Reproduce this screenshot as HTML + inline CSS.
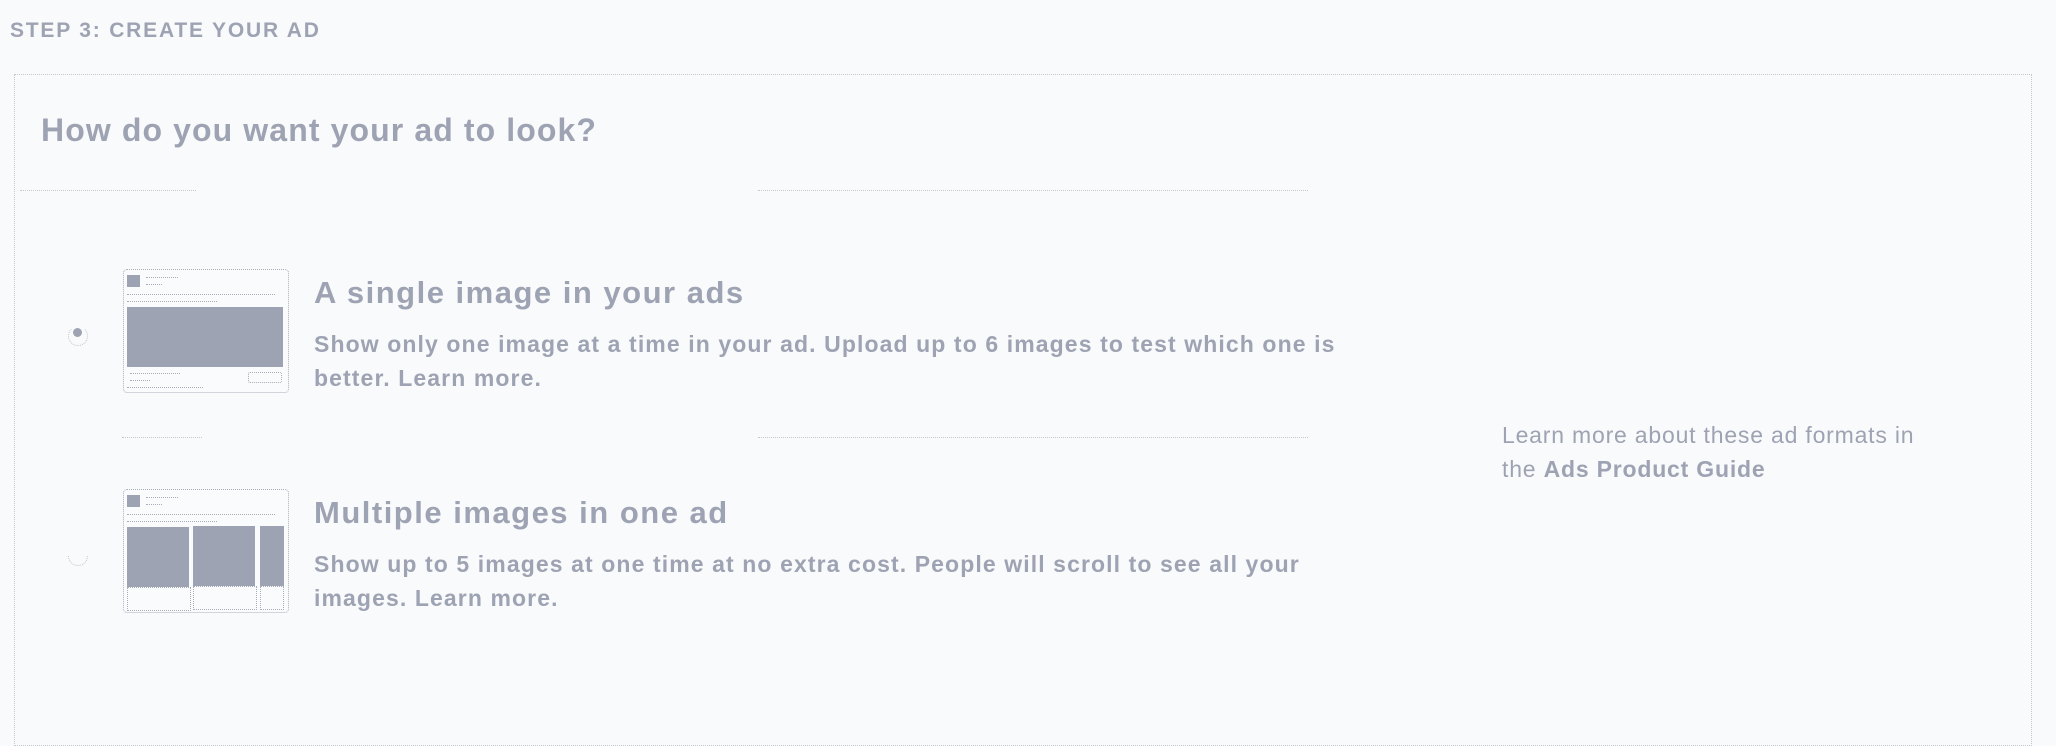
<!DOCTYPE html>
<html><head><meta charset="utf-8"><style>
html,body{margin:0;padding:0;}
body{width:2056px;height:732px;background:#f9fafb;position:relative;overflow:hidden;font-family:"Liberation Sans",Arial,sans-serif;color:#9ea3b3;}
.a{position:absolute;}
.b{font-weight:bold;}
.dl{position:absolute;height:0;border-top:1px dotted #c4c7d0;}
.thumb{position:absolute;width:164px;height:122px;border:1.5px dotted #a9adba;border-radius:4px;background:#fafbfc;}
.thumb div{position:absolute;}
.g{background:#9ea3b3;}
.ln{height:0;border-top:1px dotted #a9adba;}
</style></head><body>
<div class="a b" style="left:10px;top:19px;font-size:21px;letter-spacing:1.8px;">STEP 3: CREATE YOUR AD</div>
<div class="a" style="left:14px;top:74px;width:2016px;height:670px;border:1px dotted #c4c7d0;"></div>
<div class="a b" style="left:41px;top:112px;font-size:32px;letter-spacing:1.1px;">How do you want your ad to look?</div>
<div class="dl" style="left:20px;top:190px;width:176px;"></div>
<div class="dl" style="left:758px;top:190px;width:550px;"></div>
<div class="dl" style="left:122px;top:437px;width:80px;"></div>
<div class="dl" style="left:758px;top:437px;width:550px;"></div>

<div class="a" style="left:68px;top:326px;width:18px;height:18px;border-radius:50%;border:1px dotted #c0c4cc;border-top-color:transparent;"></div>
<div class="a g" style="left:73px;top:328px;width:9px;height:9px;border-radius:50%;"></div>
<div class="a" style="left:68px;top:546px;width:18px;height:18px;border-radius:50%;border:1px dotted #c0c4cc;border-top-color:transparent;border-left-color:transparent;transform:rotate(45deg);"></div>

<div class="thumb" style="left:123px;top:269px;">
 <div class="g" style="left:3px;top:5px;width:13px;height:12px;"></div>
 <div class="ln" style="left:22px;top:7px;width:32px;"></div>
 <div class="ln" style="left:22px;top:14px;width:16px;"></div>
 <div class="ln" style="left:3px;top:24px;width:148px;"></div>
 <div class="ln" style="left:3px;top:31px;width:90px;"></div>
 <div class="g" style="left:3px;top:37px;width:156px;height:60px;"></div>
 <div class="ln" style="left:6px;top:103px;width:50px;"></div>
 <div class="ln" style="left:6px;top:110px;width:20px;"></div>
 <div style="left:124px;top:102px;width:32px;height:9px;border:1px dotted #a9adba;border-radius:2px;"></div>
 <div class="ln" style="left:3px;top:117px;width:76px;"></div>
</div>
<div class="thumb" style="left:123px;top:489px;">
 <div class="g" style="left:3px;top:5px;width:13px;height:12px;"></div>
 <div class="ln" style="left:22px;top:7px;width:32px;"></div>
 <div class="ln" style="left:22px;top:14px;width:16px;"></div>
 <div class="ln" style="left:3px;top:24px;width:148px;"></div>
 <div class="ln" style="left:3px;top:31px;width:90px;"></div>
 <div class="g" style="left:3px;top:37px;width:62px;height:60px;"></div>
 <div class="g" style="left:69px;top:36px;width:62px;height:60px;"></div>
 <div class="g" style="left:136px;top:36px;width:24px;height:60px;"></div>
 <div style="left:3px;top:97px;width:62px;height:22px;border:1px dotted #a9adba;"></div>
 <div style="left:69px;top:96px;width:62px;height:22px;border:1px dotted #a9adba;"></div>
 <div style="left:136px;top:96px;width:22px;height:22px;border:1px dotted #a9adba;"></div>
</div>

<div class="a b" style="left:314px;top:275px;font-size:31px;letter-spacing:1.5px;">A single image in your ads</div>
<div class="a b" style="left:314px;top:327px;width:1070px;font-size:23px;line-height:34px;letter-spacing:1.1px;">Show only one image at a time in your ad. Upload up to 6 images to test which one is better. Learn more.</div>
<div class="a b" style="left:314px;top:495px;font-size:31px;letter-spacing:1.5px;">Multiple images in one ad</div>
<div class="a b" style="left:314px;top:547px;width:1030px;font-size:23px;line-height:34px;letter-spacing:1.1px;">Show up to 5 images at one time at no extra cost. People will scroll to see all your images. Learn more.</div>

<div class="a" style="left:1502px;top:418px;width:440px;font-size:23px;line-height:34px;letter-spacing:0.8px;">Learn more about these ad formats in the <span class="b">Ads Product Guide</span></div>
</body></html>
